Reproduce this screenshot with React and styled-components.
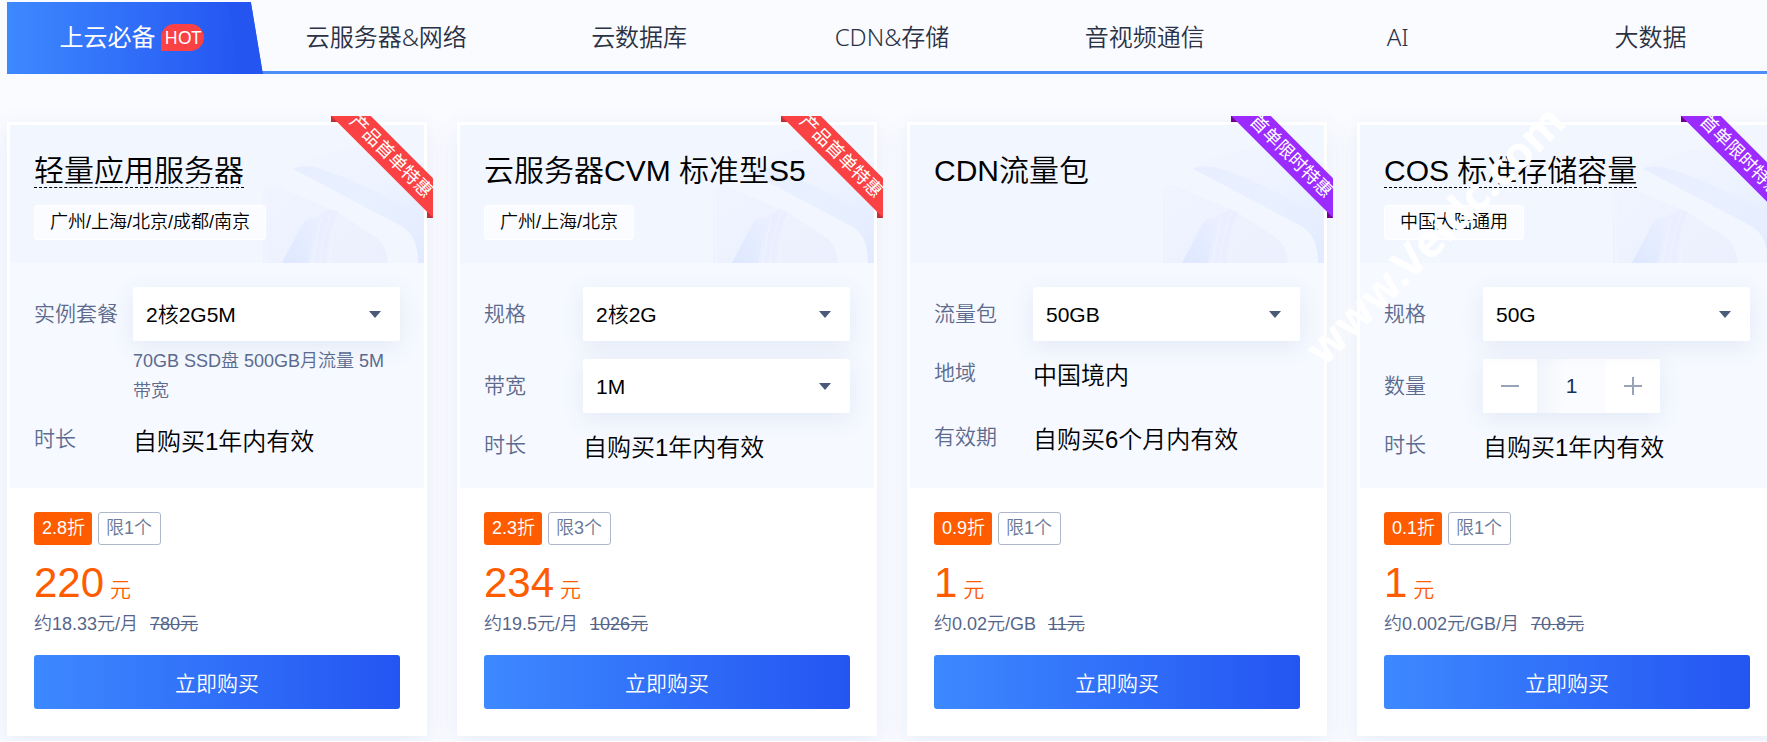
import React, { useId } from 'react'
import styled, { createGlobalStyle } from 'styled-components';

const tabs = ['上云必备', '云服务器&网络', '云数据库', 'CDN&存储', '音视频通信', 'AI', '大数据']

const products = [
  {
    title: '轻量应用服务器', linked: true, area: '广州/上海/北京/成都/南京',
    ribbon: '产品首单特惠', tone: 'red',
    rows: [
      { label: '实例套餐', type: 'select', value: '2核2G5M', hint: '70GB SSD盘 500GB月流量 5M带宽' },
      { label: '时长', type: 'text', value: '自购买1年内有效' },
    ],
    discount: '2.8折', limit: '限1个', price: '220', average: '约18.33元/月', original: '780元',
  },
  {
    title: '云服务器CVM 标准型S5', area: '广州/上海/北京',
    ribbon: '产品首单特惠', tone: 'red',
    rows: [
      { label: '规格', type: 'select', value: '2核2G' },
      { label: '带宽', type: 'select', value: '1M' },
      { label: '时长', type: 'text', value: '自购买1年内有效' },
    ],
    discount: '2.3折', limit: '限3个', price: '234', average: '约19.5元/月', original: '1026元',
  },
  {
    title: 'CDN流量包',
    ribbon: '首单限时特惠', tone: 'purple',
    rows: [
      { label: '流量包', type: 'select', value: '50GB' },
      { label: '地域', type: 'text', value: '中国境内' },
      { label: '有效期', type: 'text', value: '自购买6个月内有效' },
    ],
    discount: '0.9折', limit: '限1个', price: '1', average: '约0.02元/GB', original: '11元',
  },
  {
    title: 'COS 标准存储容量', linked: true, area: '中国大陆通用',
    ribbon: '首单限时特惠', tone: 'purple',
    rows: [
      { label: '规格', type: 'select', value: '50G' },
      { label: '数量', type: 'stepper' },
      { label: '时长', type: 'text', value: '自购买1年内有效' },
    ],
    discount: '0.1折', limit: '限1个', price: '1', average: '约0.002元/GB/月', original: '70.8元',
  },
]

const tones = {
  red: { band: '#fa4144', fold: '#bf2f38' },
  purple: { band: '#9c2bff', fold: '#720090' },
}

const Decoration = () => {
  const id = useId()
  return (
    <Art viewBox="0 0 166 120" aria-hidden="true">
      <defs>
        <linearGradient id={`${id}lid`} x1="0" y1="0" x2="1" y2="1">
          <stop offset="0" stopColor="#f1f5ff" />
          <stop offset="0.5" stopColor="#edf3ff" />
          <stop offset="1" stopColor="#e1eaff" />
        </linearGradient>
        <linearGradient id={`${id}edge`} x1="0" y1="0" x2="1" y2="0.5">
          <stop offset="0" stopColor="#e7eeff" />
          <stop offset="1" stopColor="#e6eeff" stopOpacity="0.4" />
        </linearGradient>
        <linearGradient id={`${id}face`} x1="0" y1="0" x2="1" y2="1">
          <stop offset="0" stopColor="#f1f4ff" />
          <stop offset="1" stopColor="#ebf0fe" />
        </linearGradient>
        <linearGradient id={`${id}fin`} x1="0" y1="1" x2="1" y2="0">
          <stop offset="0" stopColor="#dde7ff" />
          <stop offset="1" stopColor="#eaf0ff" />
        </linearGradient>
      </defs>
      <path d="M35 26Q38 21 50 17Q86 4 116 4L166 20V120H140Z" fill={`url(#${id}lid)`} />
      <path d="M35 26Q42 22 56 24Q110 40 166 76V96L145 84Z" fill={`url(#${id}edge)`} />
      <path d="M2 120V47Q3 36 14 34Q24 30 35 26L145 84Q160 94 160 120Z" fill="#f2f6ff" />
      <path d="M5 120V50Q6 41 14 42Q22 44 30 48L79 69L119 95Q129 104 130 120Z" fill={`url(#${id}face)`} />
      <path d="M24 120L45 80Q48 74 59 74L50 120Z" fill={`url(#${id}fin)`} />
      <path d="M59 74L72 66L80 69Q70 90 68 120H50Z" fill="#e9effe" />
      <path d="M63 74L54 120M74 68Q64 92 62 120M80 70Q72 94 72 120" stroke="#f1f4ff" strokeWidth="1" fill="none" />
      <path d="M8 120V52Q9 44 18 46" stroke="#f4f5ff" strokeWidth="1" fill="none" />
    </Art>
  )
}

const Row = ({ id, row }) => {
  const isText = row.type === 'text'
  return (
    <Field $text={isText}>
      <Label as={isText ? 'span' : 'label'} htmlFor={isText ? undefined : id} $text={isText}>
        {row.label}
      </Label>
      {row.type === 'select' && (
        <Control>
          <SelectWrap>
            <Select id={id}><option>{row.value}</option></Select>
            <Caret viewBox="0 0 12 7" aria-hidden="true"><path d="M0 0H12L6 7Z" /></Caret>
          </SelectWrap>
          {row.hint && <Hint>{row.hint}</Hint>}
        </Control>
      )}
      {row.type === 'stepper' && (
        <Stepper>
          <StepButton aria-label="减少">
            <svg width="18" height="18" viewBox="0 0 18 18"><path d="M0 9H18" /></svg>
          </StepButton>
          <StepInput id={id} defaultValue="1" />
          <StepButton aria-label="增加">
            <svg width="18" height="18" viewBox="0 0 18 18"><path d="M0 9H18M9 0V18" /></svg>
          </StepButton>
        </Stepper>
      )}
      {isText && <Value>{row.value}</Value>}
    </Field>
  )
}

const Card = ({ product, index }) => (
  <Box>
    <Head>
      <Decoration />
      <Title $linked={product.linked}>{product.title}</Title>
      {product.area && <Area>{product.area}</Area>}
    </Head>
    <Config>
      {product.rows.map((row, i) => <Row key={row.label} id={`field-${index}-${i}`} row={row} />)}
    </Config>
    <Footer>
      <Badges>
        <Discount>{product.discount}</Discount>
        <Limit>{product.limit}</Limit>
      </Badges>
      <Price>{product.price}<small>元</small></Price>
      <Average>{product.average}<del>{product.original}</del></Average>
      <Buy>立即购买</Buy>
    </Footer>
    <Corner $tone={tones[product.tone]}>
      <Ribbon $tone={tones[product.tone]}>{product.ribbon}</Ribbon>
    </Corner>
  </Box>
)

const App = () => {
  return (
    <Page>
      <GlobalStyle />
      <Tabs>
        {tabs.map((tab, i) => (
          <Tab key={tab} $active={i === 0}>
            {tab}{i === 0 && <Hot>HOT</Hot>}
          </Tab>
        ))}
      </Tabs>
      <Grid>
        {products.map((product, i) => <Card key={product.title} product={product} index={i} />)}
      </Grid>
      <Watermark>www.Veidc.com</Watermark>
    </Page>
  )
}

const GlobalStyle = createGlobalStyle`
  *{
    box-sizing: border-box;
  }
  body{
    margin: 0;
    overflow: hidden;
    background-color: #fafbff;
    font-family: 'Liberation Sans', 'Noto Sans CJK SC', sans-serif;
    font-weight: 350;
    color: #000;
  }
  button, select, input{
    font-family: inherit;
    font-weight: inherit;
    border: none;
    border-radius: 0;
    margin: 0;
    padding: 0;
  }
`

const Page = styled.main`
  position: relative;
  padding: 2px 0 5px 7px;
  margin-right: -10px;
`

const Tabs = styled.nav`
  display: grid;
  grid-template-columns: repeat(7, 1fr);
  height: 72px;
  background: linear-gradient(#4d8df8, #4d8df8) bottom / 100% 3px no-repeat;
`

const Tab = styled.button`
  display: flex;
  align-items: center;
  justify-content: center;
  gap: 6px;
  padding: ${({ $active }) => ($active ? '0 6px 2px 0' : '0 0 2px')};
  cursor: pointer;
  font-family: 'Noto Sans', 'Noto Sans CJK SC', sans-serif;
  font-size: 24px;
  font-weight: ${({ $active }) => ($active ? '400' : '350')};
  line-height: 36px;
  color: ${({ $active }) => ($active ? '#fff' : '#2b3245')};
  background: ${({ $active }) => ($active
    ? 'linear-gradient(83deg, transparent 87%, #2455f0 87%), linear-gradient(90deg, #3d89ff, #2455f2 92%)'
    : 'transparent')};
  margin-right: ${({ $active }) => ($active ? '-3px' : '0')};
  clip-path: ${({ $active }) => ($active ? 'polygon(0 0, calc(100% - 12px) 0, 100% 100%, 0 100%)' : 'none')};
`

const Hot = styled.span`
  padding: 0 3px;
  border-radius: 14px 14px 14px 0;
  background-color: #fa4144;
  font-size: 18px;
  line-height: 27px;
`

const Grid = styled.section`
  display: grid;
  grid-template-columns: repeat(4, 1fr);
  gap: 30px;
  margin-top: 48px;
`

const Box = styled.article`
  position: relative;
  border: 3px solid #fff;
  background-color: #fff;
  box-shadow: 0 6px 24px rgba(35, 85, 170, 0.09);
`

const Head = styled.header`
  position: relative;
  height: 138px;
  padding: 30px 24px 0;
  background-color: #f2f6ff;
`

const Art = styled.svg`
  position: absolute;
  right: 0;
  bottom: 0;
  width: 166px;
  height: 120px;
`

const Title = styled.h2`
  position: relative;
  width: fit-content;
  margin: 0 0 17px;
  font-size: 30px;
  font-weight: 350;
  line-height: 32px;
  border-bottom: 1px dashed ${({ $linked }) => ($linked ? '#000' : 'transparent')};
`

const Area = styled.span`
  position: relative;
  display: inline-block;
  padding: 0 15px;
  border: 1px solid #fff;
  border-radius: 3px;
  background-color: rgba(255, 255, 255, 0.7);
  font-size: 18px;
  line-height: 33px;
`

const Config = styled.div`
  display: flex;
  flex-direction: column;
  gap: 18px;
  height: 225px;
  padding: 24px 24px 0;
  background-color: #f6f9ff;
`

const Field = styled.div`
  display: flex;
  flex-shrink: 0;
  min-height: ${({ $text }) => ($text ? '46px' : '54px')};
`

const Label = styled.label`
  flex: 0 0 99px;
  font-size: 21px;
  line-height: ${({ $text }) => ($text ? '28px' : '54px')};
  color: #5c6b8e;
`

const Control = styled.div`
  flex: 1;
  min-width: 0;
`

const SelectWrap = styled.div`
  position: relative;
  box-shadow: 0 6px 24px rgba(55, 99, 170, 0.1);
`

const Select = styled.select`
  display: block;
  width: 100%;
  height: 54px;
  padding: 0 40px 0 13px;
  appearance: none;
  border-radius: 3px;
  background-color: #fff;
  font-size: 21px;
  color: #000;
`

const Caret = styled.svg`
  position: absolute;
  right: 19px;
  top: 24px;
  width: 12px;
  height: 7px;
  fill: #495b77;
  pointer-events: none;
`

const Hint = styled.p`
  margin: 5px 0 1px;
  font-size: 18px;
  line-height: 30px;
  color: #5c6b8e;
`

const Value = styled.span`
  font-size: 24px;
  line-height: 34px;
`

const Stepper = styled.div`
  display: flex;
  height: 54px;
  box-shadow: 0 6px 24px rgba(55, 99, 170, 0.1);
`

const StepButton = styled.button`
  display: flex;
  align-items: center;
  justify-content: center;
  width: 54px;
  background-color: #fff;
  cursor: pointer;
  path{
    stroke: #97a3b7;
    stroke-width: 2;
  }
`

const StepInput = styled.input`
  width: 69px;
  text-align: center;
  font-size: 21px;
  color: #16325c;
  background: linear-gradient(90deg, #f2f5fc, #fbfcff 40%, #fbfcff);
`

const Footer = styled.footer`
  padding: 24px;
`

const Badges = styled.div`
  display: flex;
  gap: 6px;
`

const Discount = styled.span`
  padding: 0 7px 0 8px;
  border-radius: 3px;
  background-color: #ff5c00;
  color: #fff;
  font-size: 18px;
  line-height: 33px;
`

const Limit = styled.span`
  padding: 0 8px 0 7px;
  border: 1px solid #aeb7c9;
  border-radius: 3px;
  color: #6b7a99;
  font-size: 18px;
  line-height: 31px;
`

const Price = styled.p`
  margin: 13px 0 0;
  color: #ff5c00;
  font-size: 42px;
  line-height: 50px;
  small{
    margin-left: 6px;
    font-size: 21px;
  }
`

const Average = styled.p`
  margin: 0;
  color: #56658a;
  font-size: 18px;
  line-height: 18px;
  del{
    margin-left: 12px;
  }
`

const Buy = styled.button`
  width: 100%;
  height: 54px;
  margin-top: 22px;
  border-radius: 3px;
  background: linear-gradient(90deg, #3d89ff, #2455f2);
  color: #fff;
  font-size: 21px;
  cursor: pointer;
`

// clipped square over the card corner, with the two folded ends behind the band
const Corner = styled.div`
  position: absolute;
  top: -9px;
  right: -9px;
  width: 102px;
  height: 102px;
  overflow: hidden;
  pointer-events: none;
  background:
    linear-gradient(${({ $tone }) => `${$tone.fold}, ${$tone.fold}`}) top left / 6px 6px no-repeat,
    linear-gradient(${({ $tone }) => `${$tone.fold}, ${$tone.fold}`}) bottom right / 6px 6px no-repeat;
`

const Ribbon = styled.span`
  position: absolute;
  top: 27px;
  left: -19px;
  width: 160px;
  padding-right: 2px;
  transform: rotate(45deg);
  background-color: ${({ $tone }) => $tone.band};
  color: #fff;
  font-size: 18px;
  font-weight: 400;
  line-height: 28px;
  text-align: center;
`

const Watermark = styled.div`
  position: absolute;
  top: 210px;
  left: 1234px;
  width: 400px;
  transform: rotate(-45deg);
  color: #fff;
  font-family: 'Noto Sans', sans-serif;
  font-size: 44px;
  font-weight: 700;
  line-height: 48px;
  text-align: center;
  pointer-events: none;
`

export default App
